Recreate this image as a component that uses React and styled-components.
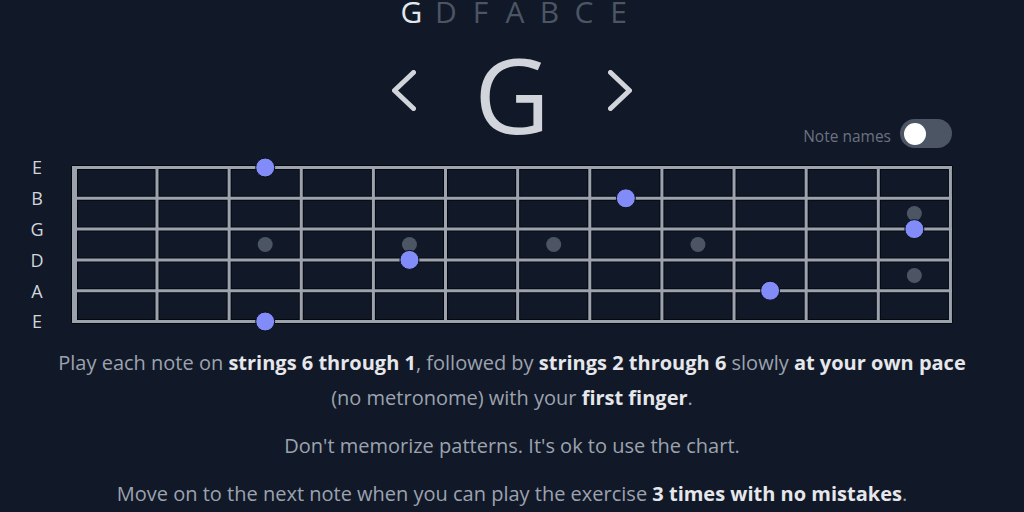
import React from "react"
import styled, { createGlobalStyle } from "styled-components"

const GlobalStyle = createGlobalStyle`
  html, body {
    margin: 0;
    padding: 0;
    background: #111827;
  }
  body {
    font-family: "Open Sans", "Noto Sans", sans-serif;
    overflow: hidden;
  }
`

export const Page = styled.div`
  width: 1024px;
  height: 512px;
  display: flex;
  flex-direction: column;
  align-items: center;
  background: #111827;
  color: #9ca3af;
  overflow: hidden;
`

export const NoteStrip = styled.div`
  display: flex;
  padding-left: 6px;
  height: 24px;
  font-size: 30px;
  line-height: 24px;
`

export const StripNote = styled.span`
  width: 34.5px;
  text-align: center;
  color: ${(p) => (p.$active ? "#e5e7eb" : "#4b5563")};
`

export const Picker = styled.div`
  margin-top: 18px;
  display: flex;
  align-items: center;
`

export const Arrow = styled.svg`
  width: 24px;
  height: 41px;
  margin-bottom: 8px;
  cursor: pointer;
`

export const BigNote = styled.div`
  width: 192px;
  text-align: center;
  font-size: 104px;
  line-height: 104px;
  color: #d1d5db;
`

export const ToggleRow = styled.div`
  width: 880px;
  margin-top: -27px;
  display: flex;
  justify-content: flex-end;
  align-items: center;
  gap: 9px;
`

export const ToggleLabel = styled.span`
  margin-top: 4px;
  font-size: 15.5px;
  line-height: 24px;
  color: #6b7280;
`

export const Track = styled.div`
  width: 52px;
  height: 29px;
  border-radius: 15px;
  background: #4b5563;
  display: flex;
  align-items: center;
  padding: 0 4px;
  box-sizing: border-box;
  justify-content: ${(p) => (p.$on ? "flex-end" : "flex-start")};
`

export const Knob = styled.div`
  width: 22px;
  height: 22px;
  border-radius: 50%;
  background: #ffffff;
`

export const BoardRow = styled.div`
  width: 880px;
  margin-top: 4px;
  display: flex;
  align-items: center;
`

export const StringLabels = styled.div`
  width: 30px;
  margin-left: -50px;
  margin-right: 20px;
  display: flex;
  flex-direction: column;
`

export const StringLabel = styled.div`
  height: 30.8px;
  display: flex;
  align-items: center;
  justify-content: center;
  font-size: 18px;
  color: #d1d5db;
`

export const Board = styled.svg`
  display: block;
  width: 880px;
  height: 157px;
  flex-shrink: 0;
  overflow: visible;
`

export const Text = styled.div`
  width: 930px;
  margin-top: 8px;
  text-align: center;
  font-size: 20px;
  line-height: 35px;
  color: #9ca3af;

  p {
    margin: 0 0 13px;
  }

  b {
    font-weight: 700;
    color: #e5e7eb;
  }
`

const strip = ["G", "D", "F", "A", "B", "C", "E"]
const labels = ["E", "B", "G", "D", "A", "E"]

const stringY = (i) => 1.5 + i * 30.8
const lineX = (k) => (k === 0 ? 2.5 : 85 + (k - 1) * 72.13)
const fretX = (n) => (lineX(n - 1) + lineX(n)) / 2

const notes = [
  [0, 3],
  [1, 8],
  [2, 12],
  [3, 5],
  [4, 10],
  [5, 3],
]

const mid = (stringY(0) + stringY(5)) / 2
const inlays = [
  [fretX(3), mid],
  [fretX(5), mid],
  [fretX(7), mid],
  [fretX(9), mid],
  [fretX(12), mid - 31],
  [fretX(12), mid + 31],
]

function Fretboard() {
  const frets = Array.from({ length: 13 }, (_, k) => k)
  return (
    <Board viewBox="0 0 880 157">
      {[0, 1, 2, 3, 4, 5].map((i) => (
        <line key={"sd" + i} x1="0" x2="880" y1={stringY(i)} y2={stringY(i)} stroke="#06080e" strokeWidth="5" />
      ))}
      {frets.map((k) => (
        <line key={"fd" + k} x1={lineX(k)} x2={lineX(k)} y1="0" y2="157" stroke="#06080e" strokeWidth={k === 0 ? 7 : 5} />
      ))}
      {[0, 1, 2, 3, 4, 5].map((i) => (
        <line key={"s" + i} x1="0" x2="880" y1={stringY(i)} y2={stringY(i)} stroke="#9ca3af" strokeWidth="3" />
      ))}
      {frets.map((k) => (
        <line key={"f" + k} x1={lineX(k)} x2={lineX(k)} y1="0" y2="157" stroke="#9ca3af" strokeWidth={k === 0 ? 5 : 3} />
      ))}
      {inlays.map(([x, y], i) => (
        <circle key={"i" + i} cx={x} cy={y} r="7.5" fill="#4b5563" />
      ))}
      {notes.map(([s, f], i) => (
        <circle key={"n" + i} cx={fretX(f)} cy={stringY(s)} r="9.5" fill="#818cf8" stroke="#0b0f1a" strokeWidth="1" />
      ))}
    </Board>
  )
}

const App = () => {
  return (
    <>
      <GlobalStyle />
      <Page>
        <NoteStrip>
          {strip.map((n, i) => (
            <StripNote key={i} $active={i === 0}>
              {n}
            </StripNote>
          ))}
        </NoteStrip>

        <Picker>
          <Arrow viewBox="0 0 24 41">
            <path d="M21.5 2.5 L2.5 20.5 L21.5 38.5" fill="none" stroke="#d1d5db" strokeWidth="5" strokeLinecap="round" strokeLinejoin="round" />
          </Arrow>
          <BigNote>G</BigNote>
          <Arrow viewBox="0 0 24 41">
            <path d="M2.5 2.5 L21.5 20.5 L2.5 38.5" fill="none" stroke="#d1d5db" strokeWidth="5" strokeLinecap="round" strokeLinejoin="round" />
          </Arrow>
        </Picker>

        <ToggleRow>
          <ToggleLabel>Note names</ToggleLabel>
          <Track>
            <Knob />
          </Track>
        </ToggleRow>

        <BoardRow>
          <StringLabels>
            {labels.map((l, i) => (
              <StringLabel key={i}>{l}</StringLabel>
            ))}
          </StringLabels>
          <Fretboard />
        </BoardRow>

        <Text>
          <p>
            Play each note on <b>strings 6 through 1</b>, followed by <b>strings 2 through 6</b> slowly{" "}
            <b>at your own pace</b> (no metronome) with your <b>first finger</b>.
          </p>
          <p>Don't memorize patterns. It's ok to use the chart.</p>
          <p>
            Move on to the next note when you can play the exercise <b>3 times with no mistakes</b>.
          </p>
        </Text>
      </Page>
    </>
  )
}

export default App
